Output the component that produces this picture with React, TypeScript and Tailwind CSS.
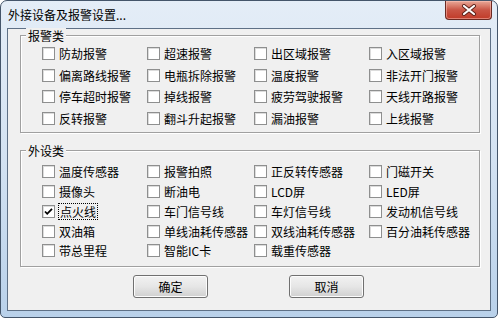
import React from "react";

const alarmItems = [
  "防劫报警", "超速报警", "出区域报警", "入区域报警",
  "偏离路线报警", "电瓶拆除报警", "温度报警", "非法开门报警",
  "停车超时报警", "掉线报警", "疲劳驾驶报警", "天线开路报警",
  "反转报警", "翻斗升起报警", "漏油报警", "上线报警",
];

const deviceItems = [
  "温度传感器", "报警拍照", "正反转传感器", "门磁开关",
  "摄像头", "断油电", "LCD屏", "LED屏",
  "点火线", "车门信号线", "车灯信号线", "发动机信号线",
  "双油箱", "单线油耗传感器", "双线油耗传感器", "百分油耗传感器",
  "带总里程", "智能IC卡", "载重传感器",
];

const CheckBox = ({ label, checked, focused }: { label: string; checked?: boolean; focused?: boolean }) => (
  <div className="flex items-center">
    <div className="w-[13px] h-[13px] shrink-0 border border-[#8e8f8f] bg-white shadow-[inset_1px_1px_0_#dcdcdc] flex items-center justify-center">
      {checked && (
        <svg width="9" height="9" viewBox="0 0 9 9">
          <path d="M1 4.5 L3.2 6.8 L8 1.8" stroke="#000" strokeWidth="1.8" fill="none" />
        </svg>
      )}
    </div>
    <span
      className={
        focused
          ? "ml-[3px] px-[1px] border border-dotted border-black leading-[15px] whitespace-nowrap"
          : "ml-[4px] leading-[15px] whitespace-nowrap"
      }
    >
      {label}
    </span>
  </div>
);

const GroupBox = ({ title, className, children }: { title: string; className: string; children: React.ReactNode }) => (
  <div className={"relative border border-[#a0a0a0] shadow-[inset_1px_1px_0_#fff,1px_1px_0_#fff] " + className}>
    <span className="absolute left-[5px] top-[-8px] bg-[#f0f0f0] px-[2px] leading-[15px]">{title}</span>
    {children}
  </div>
);

const Button = ({ label }: { label: string }) => (
  <button className="w-[75px] h-[23px] rounded-[3px] border border-[#707070] bg-gradient-to-b from-[#f2f2f2] via-[#e6e6e6] to-[#d0d0d0] shadow-[inset_0_0_0_1px_#fcfcfc] text-[12px] leading-[14px]">
    {label}
  </button>
);

export default function App() {
  return (
    <div
      className="w-[498px] h-[318px] bg-white text-[12px] text-black"
      style={{ fontFamily: '"Noto Sans CJK SC", "Liberation Sans", sans-serif' }}
    >
      <div className="relative h-full rounded-t-[7px] rounded-b-[5px] border border-[#44556a] bg-gradient-to-b from-[#e4edf7] via-[#d3e2f2] to-[#b9d1ea] flex flex-col px-[6px] pb-[6px]">
        {/* title bar */}
        <div className="h-[27px] flex items-center pl-[1px] pb-[1px]">
          <span className="leading-[15px]">外接设备及报警设置...</span>
        </div>
        <div className="absolute top-0 right-[5px] w-[47px] h-[19px] rounded-b-[4px] border border-t-0 border-[#6b2a22] bg-gradient-to-b from-[#e8a898] via-[#c95545] to-[#c03a28] shadow-[inset_0_0_0_1px_rgba(255,200,190,0.5)] flex items-center justify-center">
          <svg width="16" height="12" viewBox="0 0 16 12">
            <path d="M3 2 L13 10 M13 2 L3 10" stroke="#5a2018" strokeWidth="4" strokeLinecap="round" />
            <path d="M3 2 L13 10 M13 2 L3 10" stroke="#fff" strokeWidth="2.2" strokeLinecap="round" />
          </svg>
        </div>

        {/* client area */}
        <div className="flex-1 border border-[#5e7086] bg-[#f0f0f0] flex flex-col pl-[12px] pr-[10px]">
          <GroupBox title="报警类" className="mt-[6px] h-[98px] pt-[7px] pl-[21px]">
            <div className="grid grid-cols-[105px_107px_115px_1fr] auto-rows-[21.5px]">
              {alarmItems.map((item) => (
                <CheckBox key={item} label={item} />
              ))}
            </div>
          </GroupBox>

          <GroupBox title="外设类" className="mt-[17px] h-[117px] pt-[11px] pl-[21px]">
            <div className="grid grid-cols-[105px_107px_115px_1fr] auto-rows-[19.75px]">
              {deviceItems.map((item) => (
                <CheckBox key={item} label={item} checked={item === "点火线"} focused={item === "点火线"} />
              ))}
            </div>
          </GroupBox>

          <div className="mt-[8px] flex pl-[113px] gap-[81px]">
            <Button label="确定" />
            <Button label="取消" />
          </div>
        </div>
      </div>
    </div>
  );
}
